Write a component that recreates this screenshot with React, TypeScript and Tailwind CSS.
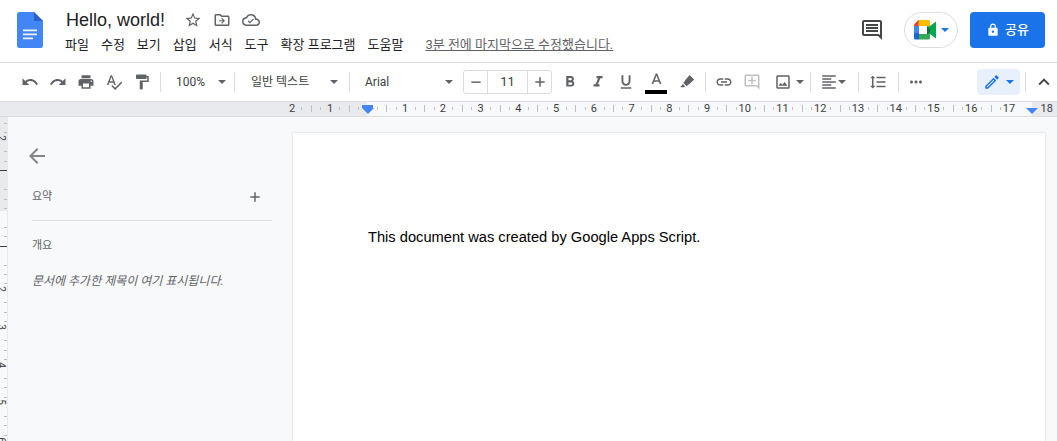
import type { ReactNode } from 'react'

const KR = "font-['Roboto','Noto_Sans_CJK_KR',sans-serif]"

const RULER_NUMBERS = [
  { label: '2', x: 292 },
  { label: '1', x: 330 },
  ...Array.from({ length: 18 }, (_, i) => ({ label: String(i + 1), x: 405 + i * 37.75 })),
]

const MENU = ['파일', '수정', '보기', '삽입', '서식', '도구', '확장 프로그램', '도움말']

function Icon({ d, size = 18, className = 'text-[#5f6368]' }: { d: string; size?: number; className?: string }) {
  return (
    <svg width={size} height={size} viewBox="0 0 24 24" fill="currentColor" className={className}>
      <path d={d} />
    </svg>
  )
}

function Caret({ className = 'border-t-[#5f6368]' }: { className?: string }) {
  return <span className={`block h-0 w-0 border-x-[4px] border-t-[4px] border-x-transparent ${className}`} />
}

function Sep({ ml = 0 }: { ml?: number }) {
  return <span style={{ marginLeft: ml }} className="block h-5 w-px shrink-0 bg-[#dadce0]" />
}

function Btn({ children, w = 28 }: { children: ReactNode; w?: number }) {
  return (
    <span style={{ width: w }} className="flex h-7 shrink-0 items-center justify-center">
      {children}
    </span>
  )
}

function DocsLogo() {
  return (
    <svg width="26" height="36" viewBox="0 0 26 36">
      <path d="M2.5 0H17l9 9v24.5a2.5 2.5 0 0 1-2.5 2.5h-21A2.5 2.5 0 0 1 0 33.500V2.500A2.500 2.500 0 0 1 2.500 0z" fill="#4285f4" />
      <path d="M17 0l9 9h-9z" fill="#2a5fc9" />
      <path d="M6 17.500h14v1.700H6zM6 21.500h14v1.700H6zM6 25.500h10v1.700H6z" fill="#f1f1f1" />
    </svg>
  )
}

function MeetLogo() {
  return (
    <svg width="24" height="20" viewBox="0 0 24 20">
      <path d="M4.500 0H13v6H6v0H0z" fill="#ea4335" />
      <path d="M4.500 0L0 4.500V6h4.500z" fill="#ea4335" />
      <path d="M4.500 0H14.500a1.500 1.500 0 0 1 1.500 1.500V8L13 6H4.500z" fill="#fbbc04" />
      <path d="M0 6h5v7H0z" fill="#4285f4" />
      <path d="M0 13h5v6.500H1.500A1.500 1.500 0 0 1 0 18z" fill="#1967d2" />
      <path d="M5 14h8v5.500H5z" fill="#34a853" />
      <path d="M13 6l3 2V1.500L16 12l-3 2z" fill="#188038" />
      <path d="M13 13.500l3-2.500v7a1.500 1.500 0 0 1-1.500 1.500H13z" fill="#34a853" />
      <path d="M13 7l3-1 6-4.500v17L16 14l-3-1z" fill="#00a651" />
      <path d="M13 6.500l3 2.500v3l-3 2.500z" fill="#137333" />
    </svg>
  )
}

function HeaderBar() {
  return (
    <header className="flex h-[63px] shrink-0 border-b border-[#dadce0] bg-white">
      <div className="ml-[17px] mt-[12px]">
        <DocsLogo />
      </div>
      <div className="ml-[23px] flex flex-col">
        <div className="mt-[7px] flex h-[26px] items-center">
          <span className="font-['Liberation_Sans',sans-serif] text-[18px] leading-[26px] text-[#202124]">Hello, world!</span>
          <span className="ml-[19px] flex items-center gap-[11px]">
            <Icon size={18} d="M22 9.240l-7.190-.620L12 2 9.190 8.630 2 9.240l5.460 4.730L5.820 21 12 17.270 18.180 21l-1.630-7.030L22 9.240zM12 15.400l-3.760 2.270 1-4.280-3.320-2.880 4.380-.380L12 6.100l1.710 4.040 4.380.380-3.320 2.880 1 4.280L12 15.400z" />
            <Icon size={18} d="M20 6h-8l-2-2H4c-1.100 0-2 .9-2 2v12c0 1.100.9 2 2 2h16c1.100 0 2-.9 2-2V8c0-1.100-.9-2-2-2zm0 12H4V6h5.170l2 2H20v10zm-8.010-1l4-4-4-4-1.060 1.060L13.100 12.250H8v1.500h5.100l-2.170 2.190z" />
            <Icon size={18} d="M19.350 10.040A7.490 7.490 0 0 0 12 4C9.110 4 6.600 5.640 5.350 8.040A5.994 5.994 0 0 0 0 14c0 3.310 2.690 6 6 6h13c2.760 0 5-2.240 5-5 0-2.640-2.050-4.780-4.650-4.960zM19 18H6c-2.210 0-4-1.790-4-4s1.790-4 4-4h.71C7.370 7.690 9.480 6 12 6c3.040 0 5.500 2.460 5.500 5.500v.5H19c1.660 0 3 1.340 3 3s-1.340 3-3 3zm-8.500-1.500l-3-3 1.060-1.060 1.940 1.940 4.440-4.440 1.060 1.060z" />
          </span>
        </div>
        <nav className={`-ml-[1px] mt-[2px] flex h-[20px] items-center gap-[12px] text-[13px] leading-[20px] text-[#202124] ${KR}`}>
          {MENU.map((m) => (
            <span key={m}>{m}</span>
          ))}
          <span className="ml-[10px] text-[#5f6368] underline">3분 전에 마지막으로 수정했습니다.</span>
        </nav>
      </div>
      <div className="ml-auto mr-[12px] mt-[12px] flex h-[36px] items-center">
        <Icon size={24} className="text-[#444746]" d="M21.990 4c0-1.100-.89-2-1.990-2H4c-1.100 0-2 .9-2 2v12c0 1.100.9 2 2 2h14l4 4-.01-18zM20 4v13.170L18.830 16H4V4h16zM6 12h12v2H6zm0-3h12v2H6zm0-3h12v2H6z" />
        <span className="ml-[20px] flex h-[36px] w-[54px] items-center justify-center gap-[3px] rounded-full border border-[#dadce0] bg-white">
          <MeetLogo />
          <Caret className="border-t-[#1a73e8]" />
        </span>
        <span className={`ml-[12px] flex h-[36px] w-[75px] items-center justify-center gap-[5px] rounded-[4px] bg-[#1a73e8] text-[13px] font-medium text-white ${KR}`}>
          <Icon size={14} className="text-white" d="M18 8h-1V6c0-2.760-2.240-5-5-5S7 3.240 7 6v2H6c-1.100 0-2 .9-2 2v10c0 1.100.9 2 2 2h12c1.100 0 2-.9 2-2V10c0-1.100-.9-2-2-2zM9 6c0-1.660 1.340-3 3-3s3 1.340 3 3v2H9V6zm3 11c-1.100 0-2-.9-2-2s.9-2 2-2 2 .9 2 2-.9 2-2 2z" />
          공유
        </span>
      </div>
    </header>
  )
}

function Toolbar() {
  return (
    <div className={`flex h-[39px] shrink-0 items-center border-b border-[#dadce0] bg-white pl-[16px] text-[12px] text-[#3c4043] ${KR}`}>
      <Btn><Icon d="M12.500 8c-2.650 0-5.050.99-6.900 2.600L2 7v9h9l-3.620-3.620c1.390-1.160 3.160-1.880 5.120-1.880 3.540 0 6.550 2.310 7.600 5.500l2.370-.78C21.080 11.030 17.150 8 12.500 8z" /></Btn>
      <Btn><Icon d="M18.400 10.600C16.550 8.990 14.150 8 11.500 8c-4.650 0-8.580 3.030-9.960 7.220L3.900 16c1.050-3.190 4.050-5.500 7.600-5.500 1.950 0 3.730.72 5.120 1.880L13 16h9V7l-3.600 3.600z" /></Btn>
      <Btn><Icon d="M19 8H5c-1.660 0-3 1.340-3 3v6h4v4h12v-4h4v-6c0-1.660-1.340-3-3-3zm-3 11H8v-5h8v5zm3-7c-.55 0-1-.45-1-1s.45-1 1-1 1 .45 1 1-.45 1-1 1zm-1-9H6v4h12V3z" /></Btn>
      <Btn><Icon d="M12.450 16h2.090L9.430 3H7.570L2.460 16h2.090l1.120-3h5.640l1.140 3zm-6.020-5L8.500 5.480 10.570 11H6.430zm15.160.59l-8.090 8.090L9.830 16l-1.410 1.410 5.090 5.090L23 13l-1.410-1.410z" /></Btn>
      <Btn><Icon d="M18 4V3c0-.55-.45-1-1-1H5c-.55 0-1 .45-1 1v4c0 .55.45 1 1 1h12c.55 0 1-.45 1-1V6h1v4H9v11c0 .55.45 1 1 1h2c.55 0 1-.45 1-1v-9h8V4h-3z" /></Btn>
      <Sep ml={4} />
      <span className="flex w-[73px] shrink-0 items-center pl-[15px]">
        <span>100%</span>
        <span className="ml-[13px]"><Caret /></span>
      </span>
      <Sep />
      <span className="flex w-[114px] shrink-0 items-center pl-[16px]">
        <span className="w-[80px]">일반 텍스트</span>
        <span className="ml-[-1px] pl-[0px]"><Caret /></span>
      </span>
      <Sep />
      <span className="flex w-[113px] shrink-0 items-center pl-[15px]">
        <span className="w-[80px]">Arial</span>
        <span><Caret /></span>
      </span>
      <span className="flex h-[24px] w-[89px] shrink-0 items-stretch rounded-[3px] border border-[#dadce0] text-[13px]">
        <span className="flex w-[24px] items-center justify-center border-r border-[#dadce0]">
          <Icon size={14} d="M4 11h16v2.500H4z" />
        </span>
        <span className="flex flex-1 items-center justify-center">11</span>
        <span className="flex w-[24px] items-center justify-center border-l border-[#dadce0]">
          <Icon size={14} d="M20 13.300h-6.700V20h-2.600v-6.700H4v-2.600h6.700V4h2.600v6.700H20z" />
        </span>
      </span>
      <span className="ml-[4px] flex">
        <Btn><Icon d="M15.600 10.790c.97-.67 1.650-1.770 1.650-2.790 0-2.260-1.750-4-4-4H7v14h7.040c2.090 0 3.710-1.700 3.710-3.790 0-1.520-.86-2.820-2.150-3.420zM10 6.500h3c.83 0 1.500.67 1.500 1.500s-.67 1.500-1.500 1.500h-3v-3zm3.500 9H10v-3h3.500c.83 0 1.500.67 1.500 1.500s-.67 1.500-1.500 1.500z" /></Btn>
        <Btn><Icon d="M10 4v3h2.210l-3.420 8H6v3h8v-3h-2.210l3.420-8H18V4z" /></Btn>
        <Btn><Icon d="M12 17c3.310 0 6-2.690 6-6V3h-2.500v8c0 1.930-1.570 3.500-3.500 3.500S8.500 12.930 8.500 11V3H6v8c0 3.310 2.690 6 6 6zm-7 2v2h14v-2H5z" /></Btn>
      </span>
      <span className="ml-[2px] flex h-7 w-[28px] shrink-0 flex-col items-center justify-center pt-[1px]">
        <Icon size={17} d="M11 2h2l6 15h-2.400l-1.300-3.400H8.700L7.400 17H5L11 2zm-1.500 9.600h5L12 5.200z" />
        <span className="mt-[1px] block h-[4px] w-[22px] bg-black" />
      </span>
      <span className="ml-[3px] flex">
        <Btn><Icon size={18} d="M15.500 2.500l6 6-6.500 6.500-1.500.5-2 2-4.500-4.500 2-2 .5-1.500zM6.500 14.500l3 3-1.500 1.500H3z" /></Btn>
      </span>
      <Sep ml={4} />
      <span className="ml-[4px] flex">
        <Btn><Icon d="M3.900 12c0-1.710 1.390-3.100 3.100-3.100h4V7H7c-2.760 0-5 2.240-5 5s2.240 5 5 5h4v-1.900H7c-1.710 0-3.100-1.390-3.100-3.100zM8 13h8v-2H8v2zm9-6h-4v1.900h4c1.710 0 3.100 1.390 3.100 3.100s-1.390 3.100-3.100 3.100h-4V17h4c2.760 0 5-2.240 5-5s-2.240-5-5-5z" /></Btn>
        <Btn><Icon className="text-[#bdc1c6]" d="M20 2H4c-1.100 0-2 .9-2 2v12c0 1.100.9 2 2 2h14l4 4V4c0-1.100-.9-2-2-2zm0 15.170L18.830 16H4V4h16v13.170zM13 5h-2v4H7v2h4v4h2v-4h4V9h-4z" /></Btn>
      </span>
      <span className="ml-[3px] flex w-[41px] shrink-0 items-center">
        <Btn><Icon d="M19 5v14H5V5h14m0-2H5c-1.100 0-2 .9-2 2v14c0 1.100.9 2 2 2h14c1.100 0 2-.9 2-2V5c0-1.100-.9-2-2-2zm-4.860 8.860l-3 3.870L9 13.140 6 17h12l-3.860-5.140z" /></Btn>
        <span className="-ml-[1px]"><Caret /></span>
      </span>
      <Sep />
      <span className="ml-[4px] flex w-[42px] shrink-0 items-center">
        <Btn><Icon d="M15 15H3v2h12v-2zm0-8H3v2h12V7zM3 13h18v-2H3v2zm0 8h18v-2H3v2zM3 3v2h18V3H3z" /></Btn>
        <span className="-ml-[5px]"><Caret /></span>
      </span>
      <Sep ml={1} />
      <span className="ml-[5px] flex">
        <Btn><Icon d="M6 7h2.500L5 3.500 1.500 7H4v10H1.500L5 20.500 8.500 17H6V7zm4-2v2h12V5H10zm0 14h12v-2H10v2zm0-6h12v-2H10v2z" /></Btn>
      </span>
      <Sep ml={6} />
      <span className="ml-[3px] flex">
        <Btn><Icon d="M6 10c-1.100 0-2 .9-2 2s.9 2 2 2 2-.9 2-2-.9-2-2-2zm12 0c-1.100 0-2 .9-2 2s.9 2 2 2 2-.9 2-2-.9-2-2-2zm-6 0c-1.100 0-2 .9-2 2s.9 2 2 2 2-.9 2-2-.9-2-2-2z" /></Btn>
      </span>
      <span className="ml-[47px] flex h-[26px] w-[43px] shrink-0 items-center justify-center gap-[5px] rounded-[4px] bg-[#e8f0fe]">
        <Icon size={18} className="text-[#1a73e8]" d="M3 17.250V21h3.750L17.810 9.940l-3.750-3.750L3 17.250zM5.920 19H5v-.92l9.060-9.060.92.92L5.920 19zM20.710 5.630l-2.340-2.340c-.2-.2-.45-.29-.71-.29s-.51.1-.7.29l-1.830 1.830 3.750 3.750 1.830-1.830c.39-.39.39-1.020 0-1.410z" />
        <Caret className="border-t-[#1a73e8]" />
      </span>
      <Sep ml={5} />
      <span className="ml-[4px] flex">
        <Btn w={28}><Icon size={22} className="text-[#444746]" d="M12 8l-6 6 1.410 1.410L12 10.830l4.590 4.580L18 14z" /></Btn>
      </span>
    </div>
  )
}

function TopRuler() {
  return (
    <div className="relative h-[15px] shrink-0 overflow-hidden border-b border-[#dadce0] bg-[#f8f9fa] font-['Roboto',sans-serif] text-[11px] leading-[14px] text-[#3c4043]">
      <div className="absolute inset-y-0 left-0 w-[367px] bg-[#e8eaed]" />
      <div className="absolute inset-y-0 left-[1032px] right-0 bg-[#e8eaed]" />
      {Array.from({ length: 76 }, (_, i) => {
        const x = 292 + i * 9.44
        const major = i % 4 === 2
        if (i % 4 === 0) return null
        return (
          <span
            key={i}
            style={{ left: x }}
            className={`absolute w-px bg-[#bdc1c6] ${major ? 'top-[3px] h-[7px]' : 'top-[5px] h-[3px]'}`}
          />
        )
      })}
      {RULER_NUMBERS.map((n) => (
        <span key={n.label + n.x} style={{ left: n.x }} className="absolute top-0 -translate-x-1/2">
          {n.label}
        </span>
      ))}
      {/* margin markers */}
      <span className="absolute left-[362px] top-[3px] h-[3px] w-[11px] bg-[#4285f4]" />
      <span className="absolute left-[362px] top-[6px] h-0 w-0 border-x-[6px] border-t-[6px] border-x-transparent border-t-[#4285f4]" />
      <span className="absolute left-[1026px] top-[6px] h-0 w-0 border-x-[6px] border-t-[6px] border-x-transparent border-t-[#4285f4]" />
    </div>
  )
}

function LeftRuler() {
  const digits = [
    { label: '2', y: 16 },
    { label: '2', y: 167 },
    { label: '3', y: 205 },
    { label: '4', y: 243 },
    { label: '5', y: 280 },
    { label: '6', y: 318 },
  ]
  return (
    <div className="relative w-[8px] shrink-0 overflow-hidden border-r border-[#e8eaed] bg-[#f8f9fa] font-['Roboto',sans-serif] text-[10px] text-[#3c4043]">
      <div className="absolute inset-x-0 top-0 h-[94px] bg-[#e8eaed]" />
      {Array.from({ length: 34 }, (_, i) => (
        <span
          key={i}
          style={{ top: 6 + i * 9.44 }}
          className={`absolute right-0 h-px ${i % 4 === 2 ? 'hidden' : i === 5 || i === 13 ? 'w-[7px] bg-[#3c4043]' : 'w-[3px] bg-[#bdc1c6]'}`}
        />
      ))}
      {digits.map((d) => (
        <span key={d.y} style={{ top: d.y }} className="absolute -left-[2px] rotate-90 leading-[10px]">
          {d.label}
        </span>
      ))}
    </div>
  )
}

function Sidebar() {
  return (
    <aside className={`w-[285px] shrink-0 ${KR}`}>
      <div className="ml-[17px] mt-[27px]">
        <Icon size={24} className="text-[#80868b]" d="M20 11H7.830l5.590-5.590L12 4l-8 8 8 8 1.410-1.410L7.830 13H20v-2z" />
      </div>
      <div className="ml-[24px] mt-[20px] flex w-[240px] items-center justify-between border-b border-[#dadce0] pb-[15px]">
        <span className="text-[11px] leading-[17px] text-[#5f6368]">요약</span>
        <span className="mr-[9px]">
          <Icon size={16} d="M19 13.100h-5.900V19h-2.200v-5.900H5v-2.200h5.900V5h2.200v5.900H19z" />
        </span>
      </div>
      <div className="ml-[24px] mt-[16px] text-[11px] leading-[17px] text-[#5f6368]">개요</div>
      <div className="ml-[24px] mt-[18px] text-[12px] italic leading-[18px] text-[#5f6368]">
        문서에 추가한 제목이 여기 표시됩니다.
      </div>
    </aside>
  )
}

export default function App() {
  return (
    <div className="flex h-screen w-screen flex-col overflow-hidden bg-[#f8f9fa]">
      <HeaderBar />
      <Toolbar />
      <TopRuler />
      <div className="flex min-h-0 flex-1">
        <LeftRuler />
        <Sidebar />
        <main className="mt-[16px] w-[752px] shrink-0 bg-white pl-[75px] pt-[94px] font-['Liberation_Sans',sans-serif] text-[14.67px] leading-[20px] text-black shadow-[0_0_2px_rgba(60,64,67,0.25)]">
          This document was created by Google Apps Script.
        </main>
      </div>
    </div>
  )
}
